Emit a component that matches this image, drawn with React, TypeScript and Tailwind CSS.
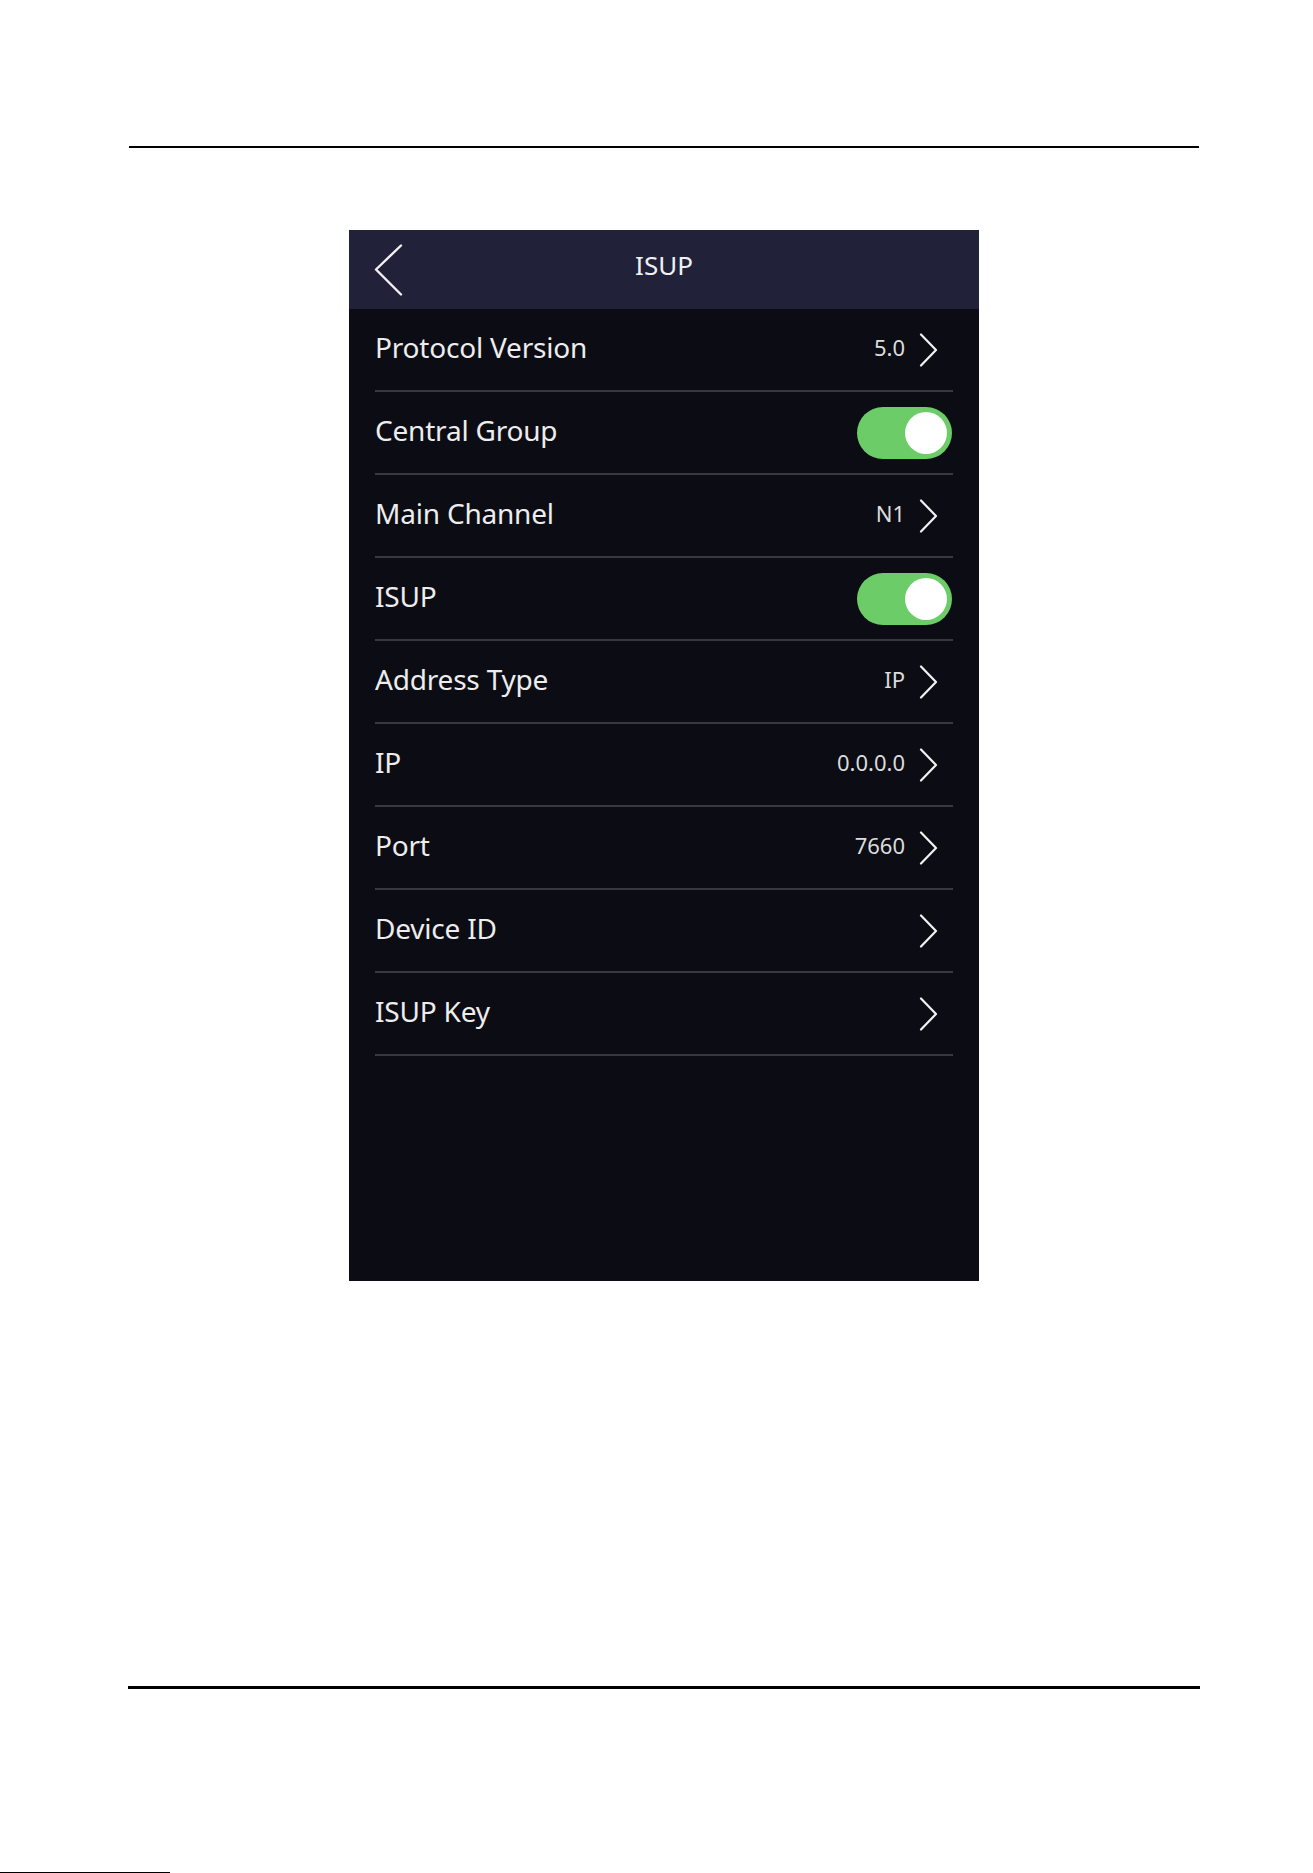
import React from "react";

type Row = { label: string; value?: string; toggle?: boolean };

const rows: Row[] = [
  { label: "Protocol Version", value: "5.0" },
  { label: "Central Group", toggle: true },
  { label: "Main Channel", value: "N1" },
  { label: "ISUP", toggle: true },
  { label: "Address Type", value: "IP" },
  { label: "IP", value: "0.0.0.0" },
  { label: "Port", value: "7660" },
  { label: "Device ID", value: "" },
  { label: "ISUP Key", value: "" },
];

function Chevron() {
  return (
    <svg width="19" height="34" viewBox="0 0 19 34" fill="none" className="block">
      <path d="M2 1.5 L17 17 L2 32.5" stroke="#f2f2f2" strokeWidth="2.2" strokeLinecap="round" strokeLinejoin="round" />
    </svg>
  );
}

function Toggle() {
  return (
    <div className="flex h-[52px] w-[95px] items-center justify-end rounded-full bg-[#6ccd68] pr-[5px]">
      <div className="h-[42px] w-[42px] rounded-full bg-white" />
    </div>
  );
}

export default function App() {
  return (
    <div
      className="relative flex min-h-[1873px] w-full flex-col bg-white"
      style={{ fontFamily: '"Noto Sans", "Open Sans", sans-serif' }}
    >
      <div className="ml-[129px] mt-[146px] h-[2px] w-[1070px] bg-black" />

      <div className="ml-[349px] mt-[82px] flex h-[1051px] w-[630px] flex-col bg-[#0b0c14]">
        <div className="relative flex h-[79px] items-center justify-center bg-[#21223a]">
          <div className="absolute left-[25px] top-[14px]">
            <svg width="30" height="53" viewBox="0 0 30 53" fill="none" className="block">
              <path d="M27 1.5 L2 25.5 L27 50.5" stroke="#f2f2f2" strokeWidth="2.4" strokeLinecap="round" strokeLinejoin="round" />
            </svg>
          </div>
          <span className="mb-[9px] text-[26px] leading-none text-[#f0f0f0]">ISUP</span>
        </div>

        <div className="flex flex-col">
          {rows.map((r) => (
            <div
              key={r.label}
              className="mx-[26px] flex h-[83px] items-center justify-between border-b-2 border-[#38393f]"
            >
              <span className="mb-[6px] text-[28px] leading-none tracking-[-0.2px] text-[#ededed]">{r.label}</span>
              {r.toggle ? (
                <div className="mr-px">
                  <Toggle />
                </div>
              ) : (
                <div className="mr-[15px] flex items-center gap-[14px]">
                  {r.value ? (
                    <span className="mb-[5px] text-[22px] leading-none text-[#dcdcdc]">{r.value}</span>
                  ) : null}
                  <Chevron />
                </div>
              )}
            </div>
          ))}
        </div>
      </div>

      <div className="ml-[128px] mt-[405px] h-[3px] w-[1072px] bg-black" />

      <div className="absolute bottom-0 left-0 h-px w-[170px] bg-black" />
    </div>
  );
}
